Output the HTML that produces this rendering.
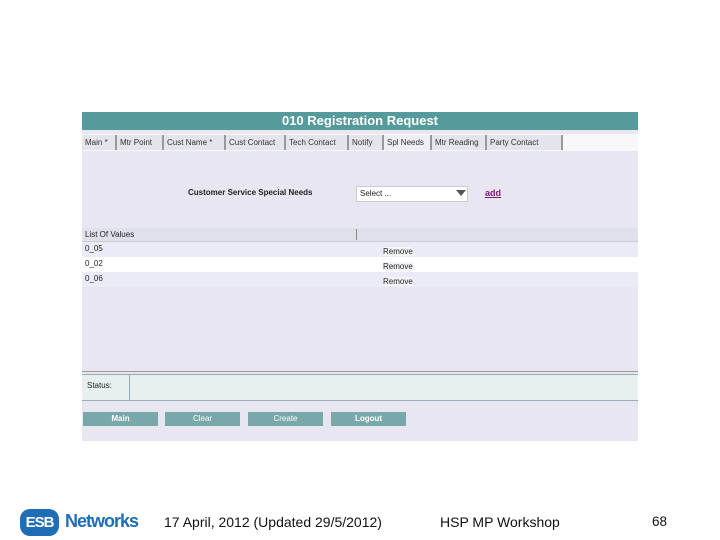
<!DOCTYPE html><html><head><style>
body{margin:0;width:720px;height:540px;background:#fff;position:relative;font-family:"Liberation Sans",sans-serif;overflow:hidden}
.a{position:absolute}
.s{font-size:8px;color:#222}
.tab{position:absolute;top:135px;height:15px;background:#e4e4ec;border-right:2px solid #999;font-size:8px;line-height:15px;color:#333;padding-left:3px;box-sizing:border-box}
.btn{position:absolute;top:412px;height:14px;width:75px;background:#78a8aa;color:#fff;font-size:8px;line-height:14px;text-align:center;font-weight:bold}
</style></head><body>
<div class="a" style="left:82px;top:112px;width:556px;height:329px;background:#e7e6f1"></div>
<div class="a" style="left:82px;top:112px;width:556px;height:18px;background:#559b9b;color:#fff;font-weight:bold;font-size:13px;line-height:18px;text-align:center">010 Registration Request</div>
<div class="a" style="left:82px;top:134px;width:556px;height:17px;background:#f8f8fb"></div>
<div class="tab" style="left:82px;width:35px">Main *</div>
<div class="tab" style="left:117px;width:47px">Mtr Point</div>
<div class="tab" style="left:164px;width:62px">Cust Name *</div>
<div class="tab" style="left:226px;width:60px">Cust Contact</div>
<div class="tab" style="left:286px;width:63px">Tech Contact</div>
<div class="tab" style="left:349px;width:35px">Notify</div>
<div class="tab" style="left:384px;width:48px;background:#eeeef5">Spl Needs</div>
<div class="tab" style="left:432px;width:55px">Mtr Reading</div>
<div class="tab" style="left:487px;width:76px">Party Contact</div>
<div class="a s" style="left:188px;top:188px;font-weight:bold">Customer Service Special Needs</div>
<div class="a s" style="left:356px;top:186px;width:112px;height:16px;background:#fff;border:1px solid #ccc;box-sizing:border-box;padding-left:3px;line-height:14px">Select ...</div>
<div class="a" style="left:456px;top:190px;width:0;height:0;border-left:5px solid transparent;border-right:5px solid transparent;border-top:6px solid #555"></div>
<div class="a" style="left:485px;top:188px;font-size:9px;font-weight:bold;color:#7a1a7a;text-decoration:underline">add</div>
<div class="a" style="left:82px;top:228px;width:556px;height:13px;background:#e0e0ea;border-bottom:1px solid #ccc"></div>
<div class="a s" style="left:85px;top:230px">List Of Values</div>
<div class="a" style="left:356px;top:229px;width:1px;height:11px;background:#888"></div>
<div class="a" style="left:82px;top:242px;width:556px;height:15px;background:#ebebf7"></div>
<div class="a" style="left:82px;top:257px;width:556px;height:15px;background:#fff"></div>
<div class="a" style="left:82px;top:272px;width:556px;height:15px;background:#ebebf7"></div>
<div class="a s" style="left:85px;top:244px">0_05</div><div class="a s" style="left:383px;top:247px;background:#f4f4f8">Remove</div>
<div class="a s" style="left:85px;top:259px">0_02</div><div class="a s" style="left:383px;top:262px;background:#f4f4f8">Remove</div>
<div class="a s" style="left:85px;top:274px">0_06</div><div class="a s" style="left:383px;top:277px;background:#f4f4f8">Remove</div>
<div class="a" style="left:82px;top:371px;width:556px;height:1px;background:#999"></div>
<div class="a" style="left:82px;top:374px;width:556px;height:27px;background:#e8f0ef;border-top:1px solid #9ab;border-bottom:1px solid #9ab;box-sizing:border-box"></div>
<div class="a" style="left:129px;top:374px;width:1px;height:27px;background:#9ab"></div>
<div class="a s" style="left:87px;top:381px">Status:</div>
<div class="btn" style="left:83px">Main</div>
<div class="btn" style="left:165px;font-weight:normal">Clear</div>
<div class="btn" style="left:248px;font-weight:normal">Create</div>
<div class="btn" style="left:331px">Logout</div>
<div class="a" style="left:20px;top:509px;width:39px;height:27px;background:#1f6db4;border-radius:10px;color:#fff;font-weight:bold;font-size:15px;line-height:27px;text-align:center;letter-spacing:-1px">ESB</div>
<div class="a" style="left:65px;top:511px;font-size:18px;font-weight:bold;color:#1f6db4;letter-spacing:-1px">Networks</div>
<div class="a" style="left:164px;top:514px;font-size:14px;color:#111">17 April, 2012 (Updated 29/5/2012)</div>
<div class="a" style="left:440px;top:514px;font-size:14px;color:#111">HSP MP Workshop</div>
<div class="a" style="left:652px;top:514px;font-size:13.5px;color:#111">68</div>
</body></html>
